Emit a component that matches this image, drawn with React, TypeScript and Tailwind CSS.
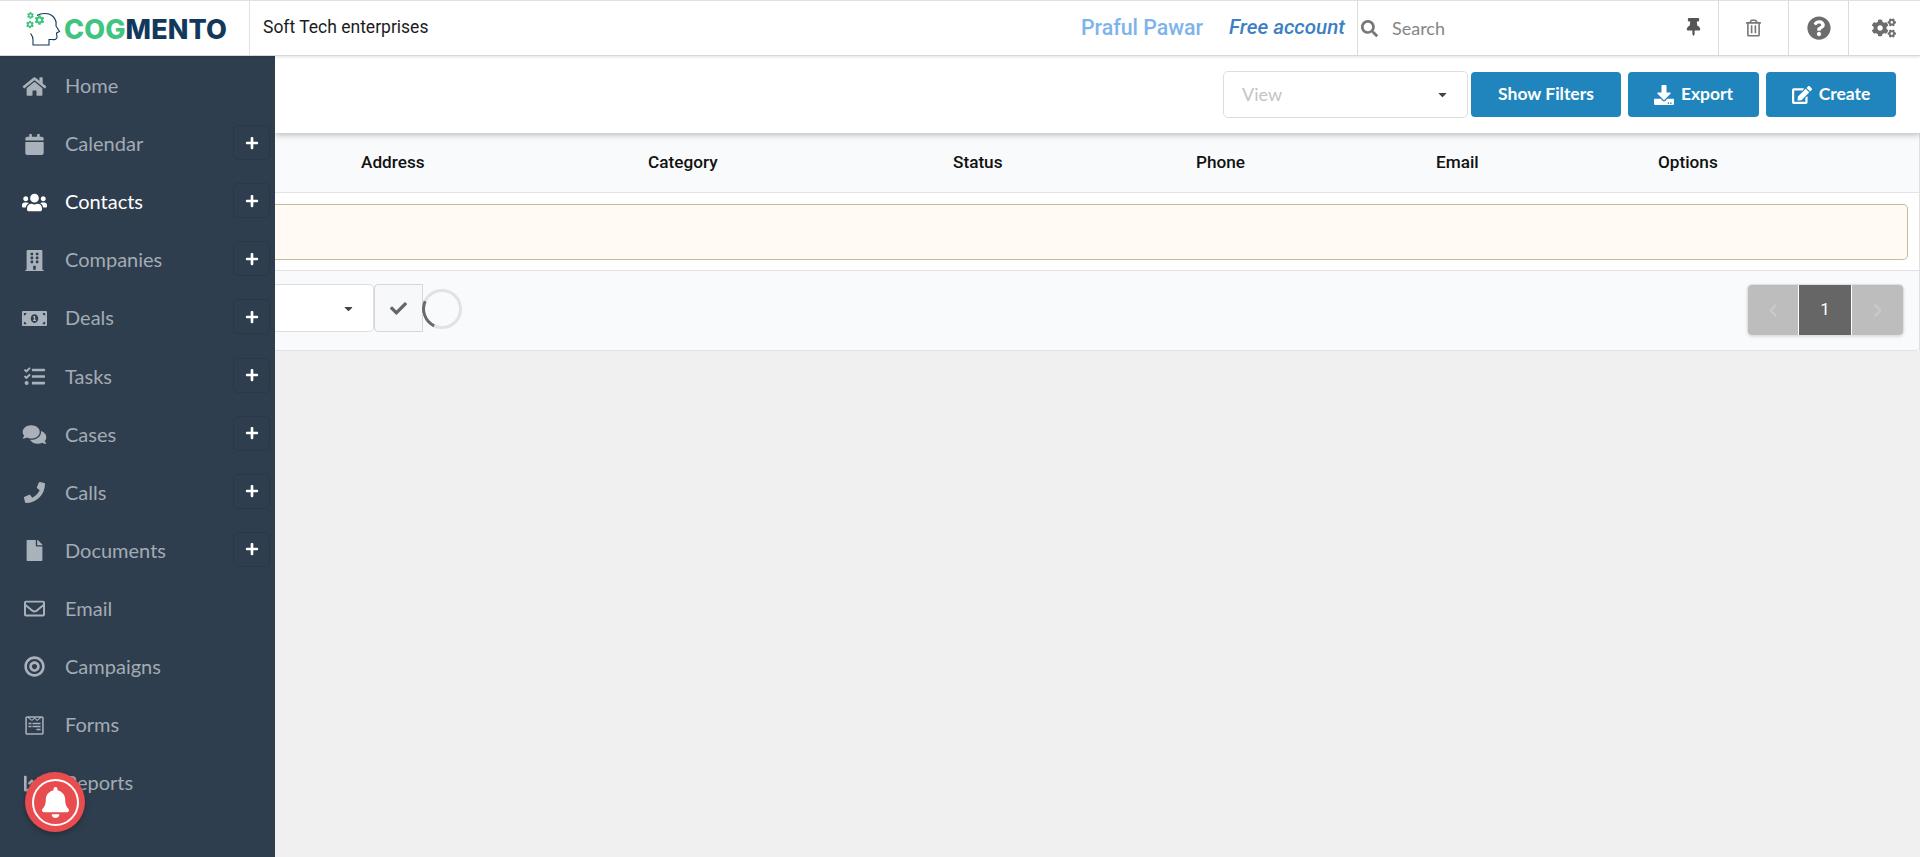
import React from 'react';
import type { IconType } from 'react-icons';
import {
  FaBell, FaBuilding, FaCalendar, FaChartLine, FaCheck, FaChevronLeft, FaChevronRight, FaCog, FaCogs, FaComments,
  FaDownload, FaEdit, FaFile, FaHome, FaMoneyBillAlt, FaPhone, FaPlus, FaQuestionCircle, FaRegEnvelope,
  FaRegTrashAlt, FaSearch, FaTasks, FaThumbtack, FaUsers, FaWpforms, FaBullseye, FaCaretDown,
} from 'react-icons/fa';

interface NavItem {
  label: string;
  icon: IconType;
  plus?: boolean;
  active?: boolean;
}

const navItems: NavItem[] = [
  { label: 'Home', icon: FaHome },
  { label: 'Calendar', icon: FaCalendar, plus: true },
  { label: 'Contacts', icon: FaUsers, plus: true, active: true },
  { label: 'Companies', icon: FaBuilding, plus: true },
  { label: 'Deals', icon: FaMoneyBillAlt, plus: true },
  { label: 'Tasks', icon: FaTasks, plus: true },
  { label: 'Cases', icon: FaComments, plus: true },
  { label: 'Calls', icon: FaPhone, plus: true },
  { label: 'Documents', icon: FaFile, plus: true },
  { label: 'Email', icon: FaRegEnvelope },
  { label: 'Campaigns', icon: FaBullseye },
  { label: 'Forms', icon: FaWpforms },
  { label: 'Reports', icon: FaChartLine },
];

const columns = [
  { label: 'Address', width: 'w-[287px]' },
  { label: 'Category', width: 'w-[305px]' },
  { label: 'Status', width: 'w-[243px]' },
  { label: 'Phone', width: 'w-[240px]' },
  { label: 'Email', width: 'w-[222px]' },
  { label: 'Options', width: 'w-[100px]' },
];

function Logo() {
  return (
    <div className="flex items-end pl-[26px] pb-[10px] w-[250px] h-full border-r border-[#e2e2e2] shrink-0">
      <svg viewBox="0 0 36 34" className="w-[36px] h-[34px] mb-[-1px] shrink-0" fill="none">
        <path
          d="M11 3.5C15 0.8 23 0.4 27 4.5C30 7.5 30.5 11 30 14L33.5 19.5L30.5 21L31 25C31 27 29 28 26 27.5L23 27.5L23 33L7 33L7 28C7.5 25 6 23.5 4.5 21.5"
          stroke="#12395b"
          strokeWidth="1.1"
        />
        <FaCog x="8.5" y="3" size="10" color="#41c47f" />
        <FaCog x="1" y="0" size="7" color="#41c47f" />
        <FaCog x="0" y="8.5" size="8" color="#41c47f" />
      </svg>
      <span className="ml-[2px] font-['Inter',sans-serif] font-extrabold text-[27px] leading-[30px] tracking-[0.1px] text-[#12395b]">
        <span className="text-[#41c47f]">COG</span>MENTO
      </span>
    </div>
  );
}

function TopBar() {
  return (
    <header className="relative z-20 flex items-stretch h-[56px] bg-white border-t border-[#e0e0e0] border-b border-b-[#d8d8d8] shadow-[0_1px_3px_rgba(0,0,0,0.12)] pr-[2px]">
      <Logo />
      <div className="flex-1 flex items-center pl-[13px] pb-[2px] font-['Roboto',sans-serif] text-[17.5px] text-[#1b1c1d]">
        Soft Tech enterprises
      </div>
      <div className="flex items-center pb-[1px] mr-[26px] font-['Roboto',sans-serif] font-medium text-[21.3px] text-[#7cb4ea]">
        Praful Pawar
      </div>
      <div className="flex items-center pb-[1px] mr-[12px] font-['Roboto',sans-serif] font-medium italic text-[20.6px] text-[#3d7fc4]">
        Free account
      </div>
      <div className="flex items-center w-[361px] border-l border-[#dcdcdc] pl-[3px] pr-[17px] text-[#6e6e6e]">
        <FaSearch className="w-[17px] h-[17px] shrink-0 text-[#777]" />
        <span className="ml-[14px] flex-1 font-['Lato',sans-serif] text-[18px] text-[#858585]">Search</span>
        <FaThumbtack className="w-[15px] h-[18px] text-[#555] mb-[3px]" />
      </div>
      <div className="flex items-center justify-center w-[70px] border-l border-[#dcdcdc]">
        <FaRegTrashAlt className="w-[15px] h-[18px] text-[#777]" />
      </div>
      <div className="flex items-center justify-center w-[60px] border-l border-[#dcdcdc]">
        <FaQuestionCircle className="w-[24px] h-[24px] text-[#6d6d6d]" />
      </div>
      <div className="flex items-center justify-center w-[70px] border-l border-[#dcdcdc]">
        <FaCogs className="w-[24px] h-[20px] text-[#6d6d6d]" />
      </div>
    </header>
  );
}

function Sidebar() {
  return (
    <aside className="w-[275px] shrink-0 bg-[#2f3e4e] pt-[1px] relative z-10 overflow-hidden">
      {navItems.map(({ label, icon: Icon, plus, active }) => (
        <div key={label} className="flex items-center h-[58.1px]">
          <span className="w-[65px] shrink-0 flex justify-center pl-[5px] pr-[1px]">
            <Icon className={`w-[25px] h-[21px] ${active ? 'text-white' : 'text-[#a9b1ba]'}`} />
          </span>
          <span className={`flex-1 pb-[2px] font-['Lato',sans-serif] text-[20px] ${active ? 'text-white' : 'text-[#a3abb4]'}`}>
            {label}
          </span>
          {plus && (
            <span className="flex items-center justify-center w-[37px] h-[35px] mr-[5px] mb-[3px] rounded-[5px] border border-[#2a3846] text-white">
              <FaPlus className="w-[14px] h-[14px]" />
            </span>
          )}
        </div>
      ))}
    </aside>
  );
}

function ToolButton({ icon: Icon, label, width }: { icon?: IconType; label: string; width: string }) {
  return (
    <button className={`${width} h-[45px] flex items-center justify-center gap-[7px] rounded-[4px] bg-[#2085bd] text-white font-['Lato',sans-serif] font-bold text-[17.5px]`}>
      {Icon && <Icon className="w-[20px] h-[20px]" />}
      {label}
    </button>
  );
}

function Toolbar() {
  return (
    <div className="relative z-[5] flex items-center justify-end h-[77px] bg-white shadow-[0_2px_6px_rgba(0,0,0,0.25)] pr-[24px] gap-[7px]">
      <div className="flex items-center justify-between w-[245px] h-[47px] mr-[-4px] mb-[1px] pl-[18px] pr-[18px] rounded-[5px] border border-[#dedede] font-['Lato',sans-serif] text-[18px] text-[#c4c4c4]">
        View
        <FaCaretDown className="w-[13px] h-[13px] text-[#444]" />
      </div>
      <ToolButton label="Show Filters" width="w-[150px]" />
      <ToolButton icon={FaDownload} label="Export" width="w-[131px]" />
      <ToolButton icon={FaEdit} label="Create" width="w-[130px]" />
    </div>
  );
}

function ContactsTable() {
  return (
    <div className="bg-white border-r border-[#e0e0e0]">
      <div className="flex items-center h-[60px] pl-[86px] bg-[#f9fafb] border-b border-[#e2e4e6] font-['Roboto',sans-serif] font-medium text-[17.2px] text-[#111]">
        {columns.map((col) => (
          <div key={col.label} className={col.width}>
            {col.label}
          </div>
        ))}
      </div>
      <div className="pt-[11px] pb-[10px] pr-[11px]">
        <div className="h-[56px] bg-[#fffaf3] border border-[#c9ba9b] border-l-0 rounded-r-[5px]" />
      </div>
      <div className="flex items-center justify-between h-[81px] pb-[5px] bg-[#f9fafb] border-y border-[#dfe1e3] rounded-br-[4px] pr-[15px]">
        <div className="flex items-center">
          <div className="flex items-center justify-end w-[99px] h-[48px] pr-[18px] bg-white border border-l-0 border-[#dedede] rounded-r-[5px]">
            <FaCaretDown className="w-[13px] h-[13px] text-[#444]" />
          </div>
          <div className="flex items-center justify-center w-[49px] h-[48px] bg-[#f7f8f9] border border-[#d6d6d6] rounded-l-[4px]">
            <FaCheck className="w-[17px] h-[17px] text-[#666]" />
          </div>
          <div className="relative w-[40px] h-[40px] mt-[2px] ml-[-1px]">
            <div className="absolute inset-0 rounded-full border-[3px] border-[#e2e2e2]" />
            <div className="absolute inset-0 rounded-full border-[3px] border-transparent border-l-[#6a6a6a] -rotate-[20deg]" />
          </div>
        </div>
        <div className="flex h-[52px] mt-[4px] rounded-[5px] border-[1px] border-[#e0e0e0] overflow-hidden shadow-[0_1px_3px_rgba(0,0,0,0.12)] text-white font-['Roboto',sans-serif] text-[17px]">
          <span className="w-[51px] flex items-center justify-center bg-[#bdbdbd] border-r border-white text-[#c9c9c9]">
            <FaChevronLeft className="w-[12px] h-[15px]" />
          </span>
          <span className="w-[53px] flex items-center justify-center bg-[#666] border-r border-white">1</span>
          <span className="w-[51px] flex items-center justify-center bg-[#bdbdbd] text-[#c9c9c9]">
            <FaChevronRight className="w-[12px] h-[15px]" />
          </span>
        </div>
      </div>
    </div>
  );
}

export default function App() {
  return (
    <div className="relative flex flex-col h-[857px] overflow-hidden bg-[#f0f0f0]">
      <TopBar />
      <div className="flex flex-1 min-h-0">
        <Sidebar />
        <main className="flex-1 min-w-0">
          <Toolbar />
          <ContactsTable />
        </main>
      </div>
      {/* notification bell floats over the sidebar */}
      <div className="absolute z-30 left-[25px] top-[772px] w-[60px] h-[60px] rounded-full bg-[#e84c4f] flex items-center justify-center shadow-[0_2px_6px_rgba(0,0,0,0.3)]">
        <div className="w-[47px] h-[47px] rounded-full border-2 border-white flex items-center justify-center">
          <FaBell className="w-[29px] h-[31px] text-white" />
        </div>
      </div>
    </div>
  );
}
